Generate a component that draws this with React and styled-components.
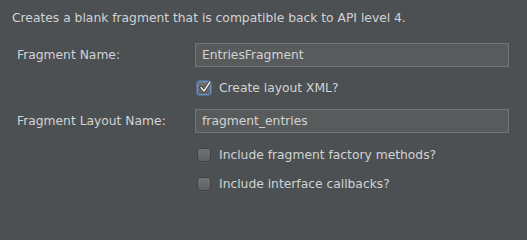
import React from "react";
import styled, { createGlobalStyle } from "styled-components";

const GlobalStyle = createGlobalStyle`
  html, body {
    margin: 0;
    padding: 0;
    background: #4c5053;
  }
  body {
    font-family: "DejaVu Sans", "Noto Sans", sans-serif;
    font-size: 12.3px;
    color: #d2d3d3;
  }
`;

const Panel = styled.div`
  width: 527px;
  height: 206px;
  box-sizing: border-box;
  padding: 10px 18px 0 12px;
  background: #4c5053;
`;

const Description = styled.div`
  height: 16px;
  line-height: 16px;
  margin-bottom: 17px;
`;

const Form = styled.div`
  display: grid;
  grid-template-columns: 183px 1fr;
  padding-left: 5px;
  align-items: center;
`;

const Label = styled.label`
  height: ${(p) => p.h || 24}px;
  line-height: ${(p) => p.h || 24}px;
`;

const Field = styled.input`
  box-sizing: border-box;
  width: 314px;
  height: 24px;
  padding: 0 6px;
  margin-left: -5px;
  background: #585b5c;
  border: 1px solid #737577;
  color: #d2d3d3;
  font: inherit;
  outline: none;
`;

const CheckRow = styled.label`
  grid-column: 2;
  display: flex;
  align-items: center;
  gap: 8px;
  height: ${(p) => p.h}px;
  margin-left: -3px;
`;

const Box = styled.span`
  position: relative;
  box-sizing: border-box;
  width: 14px;
  height: 14px;
  border-radius: 3px;
  border: 1px solid ${(p) => (p.focus ? "#6c95c4" : "#3f4245")};
  background: linear-gradient(#707274, #5d5f61);
  box-shadow: ${(p) => (p.focus ? "0 0 0 1px #4d6f97" : "0 1px 0 #55585a")};
  flex: none;
`;

const Tick = styled.svg`
  position: absolute;
  left: 1px;
  top: -2px;
`;

function Checkbox({ checked, focus, label, h }) {
  return (
    <CheckRow h={h}>
      <Box focus={focus}>
        {checked && (
          <Tick width="13" height="14" viewBox="0 0 13 14">
            <path
              d="M2 7.5 L5 11 L11 2"
              fill="none"
              stroke="#2e3033"
              strokeWidth="3"
              strokeLinecap="round"
              strokeLinejoin="round"
            />
            <path
              d="M2 7.5 L5 11 L11 2"
              fill="none"
              stroke="#e8e8e8"
              strokeWidth="1.6"
              strokeLinecap="round"
              strokeLinejoin="round"
            />
          </Tick>
        )}
      </Box>
      <span>{label}</span>
    </CheckRow>
  );
}

export default function App() {
  return (
    <>
      <GlobalStyle />
      <Panel>
        <Description>
          Creates a blank fragment that is compatible back to API level 4.
        </Description>
        <Form>
          <Label>Fragment Name:</Label>
          <Field defaultValue="EntriesFragment" />
          <Checkbox checked focus label="Create layout XML?" h={42} />
          <Label>Fragment Layout Name:</Label>
          <Field defaultValue="fragment_entries" />
          <Checkbox label="Include fragment factory methods?" h={44} />
          <Checkbox label="Include interface callbacks?" h={14} />
        </Form>
      </Panel>
    </>
  );
}
